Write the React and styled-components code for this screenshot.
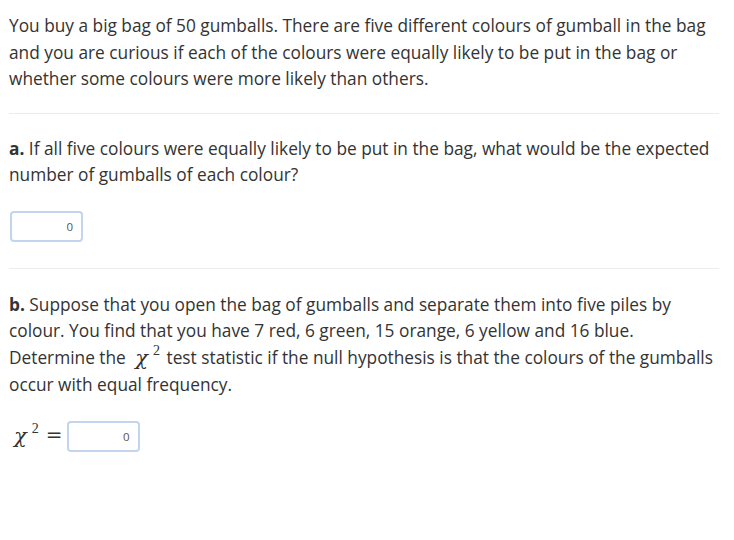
import React from "react";
import styled, { createGlobalStyle } from "styled-components";

const GlobalStyle = createGlobalStyle`
  html, body {
    margin: 0;
    padding: 0;
    background: #ffffff;
  }
  body {
    font-family: "Open Sans", "Liberation Sans", sans-serif;
    color: #333333;
  }
`;

const Page = styled.div`
  width: 710px;
  padding: 13px 0 0 9px;
`;

const Para = styled.p`
  margin: 0;
  font-size: 17.3px;
  line-height: ${(p) => p.lh || 26.5}px;
`;

const Section = styled.div`
  padding: ${(p) => (p.first ? "0 0 20px" : p.last ? "23px 0 26px" : "22px 0 26px")};
  border-bottom: ${(p) => (p.last ? "none" : "1px solid #ececec")};
`;

const AnswerRow = styled.div`
  display: flex;
  align-items: center;
  gap: 4px;
  margin-top: ${(p) => p.gap}px;
  padding-left: ${(p) => p.indent}px;
`;

const NumberBox = styled.div`
  box-sizing: border-box;
  width: 73px;
  height: 31px;
  border: 2px solid #c2d5ee;
  border-radius: 4px;
  display: flex;
  align-items: center;
  justify-content: flex-end;
  padding-right: 8px;
  font-size: 11.5px;
  color: #555555;
`;

const Math = styled.span`
  font-family: "DejaVu Serif", "Liberation Serif", serif;
  font-size: 21px;
  line-height: 0;
  color: #333333;
  white-space: nowrap;
  margin: ${(p) => p.margin || "0"};
`;

const Chi = styled.i`
  font-style: italic;
  position: relative;
  top: 1px;
`;

const Sup = styled.span`
  position: relative;
  top: -9px;
  font-family: "Liberation Serif", serif;
  font-size: 14px;
  font-style: normal;
  line-height: 0;
  margin-left: 5px;
`;

const Equals = styled.span`
  font-size: 20px;
  margin-left: 7px;
`;

const ChiSquared = ({ margin }) => (
  <Math margin={margin}>
    <Chi>χ</Chi>
    <Sup>2</Sup>
  </Math>
);

export default function App() {
  return (
    <>
      <GlobalStyle />
      <Page>
        <Section first>
          <Para>
            You buy a big bag of 50 gumballs. There are five different colours of gumball in the bag
            and you are curious if each of the colours were equally likely to be put in the bag or
            whether some colours were more likely than others.
          </Para>
        </Section>
        <Section>
          <Para>
            <b>a.</b> If all five colours were equally likely to be put in the bag, what would be the
            expected number of gumballs of each colour?
          </Para>
          <AnswerRow gap={22} indent={1}>
            <NumberBox>0</NumberBox>
          </AnswerRow>
        </Section>
        <Section last>
          <Para lh={26.7}>
            <b>b.</b> Suppose that you open the bag of gumballs and separate them into five piles by
            colour. You find that you have 7 red, 6 green, 15 orange, 6 yellow and 16 blue.
            Determine the <ChiSquared margin="0 2px 0 5px" /> test statistic if the null hypothesis is
            that the colours of the gumballs occur with equal frequency.
          </Para>
          <AnswerRow gap={23} indent={5}>
            <Math>
              <Chi>χ</Chi>
              <Sup>2</Sup>
              <Equals>=</Equals>
            </Math>
            <NumberBox>0</NumberBox>
          </AnswerRow>
        </Section>
      </Page>
    </>
  );
}
